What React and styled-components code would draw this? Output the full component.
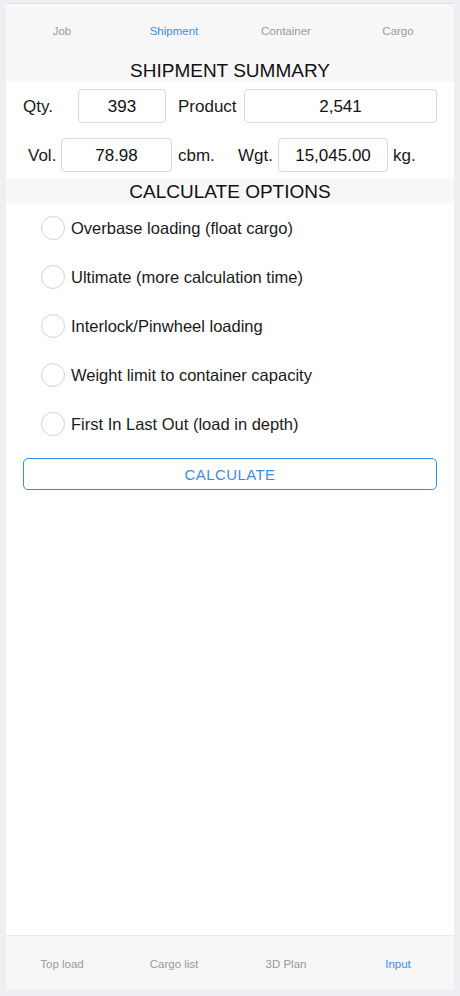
import React from 'react';
import styled, { createGlobalStyle } from 'styled-components';

const GlobalStyle = createGlobalStyle`
  html, body {
    margin: 0;
    padding: 0;
    background: #eeeef3;
    font-family: "Liberation Sans", Arial, sans-serif;
  }
  * { box-sizing: border-box; }
`

const Page = styled.div`
  height: 996px;
  padding: 3px 6px 6px;
  display: flex;
`

const Frame = styled.div`
  flex: 1;
  display: flex;
  flex-direction: column;
  background: #ffffff;
  border-top: 1px solid #e0e0e4;
  border-radius: 2px;
  overflow: hidden;
`

const TabBar = styled.div`
  display: grid;
  grid-template-columns: repeat(4, 1fr);
  align-items: center;
  height: ${p => p.$height}px;
  background: #f7f7f7;
  border-top: ${p => (p.$bottom ? '1px solid #ebebeb' : 'none')};
`

const Tab = styled.div`
  text-align: center;
  font-size: 11.5px;
  padding-top: 1px;
  color: ${p => (p.$active ? '#3a8ee6' : '#9a9a9a')};
`

const SectionTitle = styled.div`
  height: ${p => p.$height}px;
  background: #f7f7f7;
  display: flex;
  align-items: center;
  justify-content: center;
  font-size: 19px;
  color: #111;
  padding-top: 2px;
`

const Summary = styled.div`
  padding: 7px 0 7px;
  display: flex;
  flex-direction: column;
  gap: 15px;
`

const Row = styled.div`
  display: flex;
  align-items: center;
  height: 34px;
  padding-left: ${p => p.$pl}px;
`

const Label = styled.span`
  width: ${p => p.$w}px;
  padding-left: ${p => p.$pl || 0}px;
  padding-top: 2px;
  font-size: 17px;
  color: #1a1a1a;
  white-space: nowrap;
`

const Field = styled.div`
  width: ${p => p.$w}px;
  height: 34px;
  border: 1px solid #d9d9d9;
  border-radius: 4px;
  background: #fff;
  display: flex;
  align-items: center;
  justify-content: center;
  padding-top: 2px;
  font-size: 17px;
  color: #111;
`

const Options = styled.div`
  display: flex;
  flex-direction: column;
`

const Option = styled.label`
  height: 49px;
  display: flex;
  align-items: center;
  gap: 6px;
  padding-left: 35px;
  padding-top: 2px;
  font-size: 16.5px;
  color: #1a1a1a;
`

const Radio = styled.span`
  width: 24px;
  height: 24px;
  margin-top: -1px;
  border-radius: 50%;
  border: 1px solid #d3d3d3;
  background: #fff;
  flex-shrink: 0;
`

const CalcButton = styled.button`
  margin: 10px 17px 0;
  height: 32px;
  border: 1.5px solid #3a8ee6;
  border-radius: 5px;
  background: #fff;
  color: #3a8ee6;
  font-family: "Liberation Sans", Arial, sans-serif;
  font-size: 15px;
  letter-spacing: 0.4px;
`

const Spacer = styled.div`
  flex: 1;
`

const options = [
  'Overbase loading (float cargo)',
  'Ultimate (more calculation time)',
  'Interlock/Pinwheel loading',
  'Weight limit to container capacity',
  'First In Last Out (load in depth)',
];

export default function App() {
  return (
    <>
      <GlobalStyle />
      <Page>
        <Frame>
          <TabBar $height={53}>
            <Tab>Job</Tab>
            <Tab $active>Shipment</Tab>
            <Tab>Container</Tab>
            <Tab>Cargo</Tab>
          </TabBar>
          <SectionTitle $height={25}>SHIPMENT SUMMARY</SectionTitle>
          <Summary>
            <Row $pl={17}>
              <Label $w={55}>Qty.</Label>
              <Field $w={88}>393</Field>
              <Label $w={78} $pl={12}>Product</Label>
              <Field $w={193}>2,541</Field>
            </Row>
            <Row $pl={22}>
              <Label $w={33}>Vol.</Label>
              <Field $w={111}>78.98</Field>
              <Label $w={60} $pl={6}>cbm.</Label>
              <Label $w={46} $pl={6}>Wgt.</Label>
              <Field $w={110}>15,045.00</Field>
              <Label $w={40} $pl={5}>kg.</Label>
            </Row>
          </Summary>
          <SectionTitle $height={24}>CALCULATE OPTIONS</SectionTitle>
          <Options>
            {options.map((opt) => {
              return (
                <Option key={opt}>
                  <Radio />
                  {opt}
                </Option>
              )
            })}
          </Options>
          <CalcButton>CALCULATE</CalcButton>
          <Spacer />
          <TabBar $height={55} $bottom>
            <Tab>Top load</Tab>
            <Tab>Cargo list</Tab>
            <Tab>3D Plan</Tab>
            <Tab $active>Input</Tab>
          </TabBar>
        </Frame>
      </Page>
    </>
  )
}
